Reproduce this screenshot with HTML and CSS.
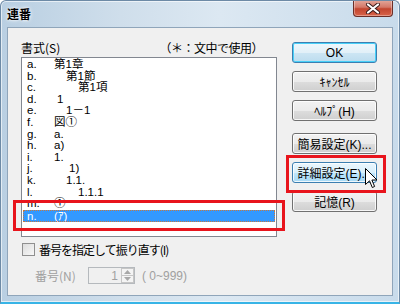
FILE: index.html
```html
<!DOCTYPE html>
<html>
<head>
  <meta charset="UTF-8">
  <title>連番</title>
  <link rel="stylesheet" href="styles.css">
</head>
<body>
  <div class="window">
    <!-- Title bar -->
    <div class="titlebar">
      <span class="title">連番</span>
      <div class="close">
        <svg width="16" height="11" viewBox="0 0 16 11">
          <path d="M3 1.5 L13 9.5 M13 1.5 L3 9.5" stroke="#3a1a1a" stroke-width="4" stroke-linecap="round"/>
          <path d="M3 1.5 L13 9.5 M13 1.5 L3 9.5" stroke="#fff" stroke-width="2.2" stroke-linecap="round"/>
        </svg>
      </div>
    </div>

    <!-- Dialog body -->
    <div class="client">
      <div class="left">
        <div class="label-row">
          <span>書式(S)</span>
          <span class="hint">（＊：文中で使用）</span>
        </div>
        <div class="listbox">
          <div class="row"><span class="key">a.</span><span class="lv0">第1章</span></div>
          <div class="row"><span class="key">b.</span><span class="lv1">第1節</span></div>
          <div class="row"><span class="key">c.</span><span class="lv2">第1項</span></div>
          <div class="row"><span class="key">d.</span><span class="lv0 nudge">1</span></div>
          <div class="row"><span class="key">e.</span><span class="lv1">1－1</span></div>
          <div class="row"><span class="key">f.</span><span class="lv0">図①</span></div>
          <div class="row"><span class="key">g.</span><span class="lv0">a.</span></div>
          <div class="row"><span class="key">h.</span><span class="lv0">a)</span></div>
          <div class="row"><span class="key">i.</span><span class="lv0">1.</span></div>
          <div class="row"><span class="key">j.</span><span class="lv1 nudge">1)</span></div>
          <div class="row"><span class="key">k.</span><span class="lv1">1.1.</span></div>
          <div class="row"><span class="key">l.</span><span class="lv2">1.1.1</span></div>
          <div class="row"><span class="key">m.</span><span class="lv0">①</span></div>
          <div class="row selected"><span class="key">n.</span><span class="lv0">(ｱ)</span></div>
        </div>
        <label class="check">
          <span class="box"></span>
          <span>番号を指定して振り直す(I)</span>
        </label>
        <div class="numrow">
          <span class="numlabel">番号(N)</span>
          <div class="spin">
            <span class="spin-value">1</span>
            <div class="spin-btns">
              <div class="spin-btn"><svg width="7" height="4" viewBox="0 0 7 4"><path d="M0 4 L3.5 0 L7 4 Z" fill="#a8a8a8"/></svg></div>
              <div class="spin-btn"><svg width="7" height="4" viewBox="0 0 7 4"><path d="M0 0 L3.5 4 L7 0 Z" fill="#a8a8a8"/></svg></div>
            </div>
          </div>
          <span class="range">( 0~999)</span>
        </div>
      </div>

      <div class="buttons">
        <button class="btn default">OK</button>
        <button class="btn">ｷｬﾝｾﾙ</button>
        <button class="btn">ﾍﾙﾌﾟ(H)</button>
        <button class="btn group">簡易設定(K)...</button>
        <button class="btn hover">詳細設定(E)...</button>
        <button class="btn">記憶(R)</button>
      </div>
    </div>

    <!-- Red callout boxes and mouse pointer -->
    <div class="mark mark-list"></div>
    <div class="mark mark-btn"></div>
    <svg class="cursor" width="13" height="21" viewBox="0 0 13 21">
      <path d="M0.5 0.5 L0.5 16.5 L4.5 12.8 L7.3 19.5 L9.6 18.5 L6.9 12 L12 12 Z" fill="#fff" stroke="#000" stroke-width="1" stroke-linejoin="round"/>
    </svg>
  </div>
</body>
</html>
```

FILE: styles.css
```css
body {
  margin: 0;
  padding: 0;
  font-family: "Liberation Sans", "Noto Sans CJK JP", sans-serif;
  font-size: 12px;
  color: #000;
}
/* Aero window frame */
.window {
  position: relative;
  width: 400px;
  height: 304px;
  box-sizing: border-box;
  background: linear-gradient(to right, #b9cfe2 0%, #cfdeeb 30%, #dce8f2 55%, #c8dbeb 100%);
  border: 1px solid #6d8aa6;
  border-bottom: 2px solid #38b4e6;
  border-radius: 6px 6px 0 0;
  box-shadow: inset 0 0 0 1px rgba(255,255,255,0.6);
  overflow: hidden;
}
.titlebar {
  height: 26px;
  display: flex;
  align-items: flex-start;
  justify-content: space-between;
}
.title {
  margin: 6px 0 0 6px;
  font-family: "Noto Sans CJK JP", sans-serif;
  font-weight: bold;
  font-size: 12px;
  line-height: 14px;
  text-shadow: 0 0 4px #fff, 0 0 2px #fff;
}
.close {
  width: 40px;
  height: 17px;
  margin: -1px 6px 0 0;
  box-sizing: border-box;
  border: 1px solid #6b2e27;
  border-top: none;
  border-radius: 0 0 4px 4px;
  background: linear-gradient(#e3a99d 0%, #d47868 45%, #c2452f 55%, #d8644a 100%);
  box-shadow: inset 0 0 0 1px rgba(255,255,255,0.35);
  display: flex;
  align-items: center;
  justify-content: center;
}
/* Dialog client area */
.client {
  height: 269px;
  margin: 0 6px 0 6px;
  box-sizing: border-box;
  border: 1px solid #8fa5ba;
  background: #f0f0f0;
  display: flex;
  align-items: flex-start;
  padding: 13px 0 0 13px;
}
.left {
  width: 256px;
}
.label-row {
  height: 16px;
  display: flex;
  justify-content: space-between;
  line-height: 14px;
  font-family: "Noto Sans CJK JP", sans-serif;
}
.hint {
  margin-right: 14px;
  letter-spacing: -0.5px;
}
.listbox {
  height: 180px;
  box-sizing: border-box;
  border: 1px solid #828790;
  background: #fff;
  padding: 0 1px 0 1px;
}
.row {
  height: 11.6px;
  line-height: 11.6px;
  display: flex;
  white-space: nowrap;
  font-size: 11.5px;
}
.row:first-child { margin-top: 1px; }
.key {
  width: 31px;
  padding-left: 4px;
  box-sizing: border-box;
}
.lv1 { padding-left: 12px; }
.lv2 { padding-left: 24px; }
.nudge { margin-left: 3px; }
.row.selected {
  height: 12px;
  line-height: 12px;
  background: #3399ff;
  color: #fff;
  outline: 1px dotted #c8783c;
  outline-offset: -1px;
}
/* Checkbox and number input */
.check {
  display: flex;
  align-items: center;
  margin-top: 6px;
  height: 13px;
  font-family: "Noto Sans CJK JP", sans-serif;
  letter-spacing: -1px;
}
.box {
  width: 11px;
  height: 11px;
  margin: 0 4px 0 1px;
  border: 1px solid #8f8f8f;
  background: linear-gradient(135deg, #dcdcdc, #f8f8f8);
}
.numrow {
  display: flex;
  align-items: center;
  margin-top: 11px;
  color: #a0a0a0;
}
.numlabel {
  width: 53px;
  padding-left: 14px;
  font-family: "Noto Sans CJK JP", sans-serif;
}
.spin {
  width: 47px;
  height: 17px;
  box-sizing: border-box;
  border: 1px solid #b5b9bd;
  background: #f0f0f0;
  display: flex;
  justify-content: flex-end;
  align-items: center;
}
.spin-value { margin-right: 3px; }
.spin-btns {
  width: 13px;
  height: 15px;
  display: flex;
  flex-direction: column;
}
.spin-btn {
  flex: 1;
  border: 1px solid #c6c6c6;
  background: #f4f4f4;
  display: flex;
  align-items: center;
  justify-content: center;
}
.spin-btn + .spin-btn { border-top: none; }
.range { margin-left: 7px; }
/* Command buttons */
.buttons {
  display: flex;
  flex-direction: column;
  margin: 1px 0 0 15px;
}
.btn {
  width: 85px;
  height: 21px;
  margin-bottom: 8px;
  padding: 0;
  font-family: "Liberation Sans", "Noto Sans CJK JP", sans-serif;
  font-size: 12px;
  color: #000;
  border: 1px solid #707070;
  border-radius: 3px;
  background: linear-gradient(#f2f2f2 0%, #ebebeb 50%, #dddddd 51%, #cfcfcf 100%);
  box-shadow: inset 0 0 0 1px rgba(255,255,255,0.8);
}
.btn.default {
  border-color: #3c7fb1;
  box-shadow: inset 0 0 0 1px #48d0f8;
  background: linear-gradient(#eef7fc 0%, #e2f0f8 50%, #cde6f4 51%, #bcdcee 100%);
}
.btn.group { margin-top: 4px; }
.btn.hover {
  border-color: #3c7fb1;
  background: linear-gradient(#eaf6fd 0%, #d9f0fc 50%, #bee6fd 51%, #a7d9f5 100%);
}
/* Red annotation boxes */
.mark {
  position: absolute;
  box-sizing: border-box;
  border: 3px solid #e8141c;
}
.mark-list { left: 12px; top: 199px; width: 272px; height: 31px; }
.mark-btn { left: 285px; top: 154px; width: 100px; height: 38px; }
.cursor { position: absolute; left: 364px; top: 167px; }
```
